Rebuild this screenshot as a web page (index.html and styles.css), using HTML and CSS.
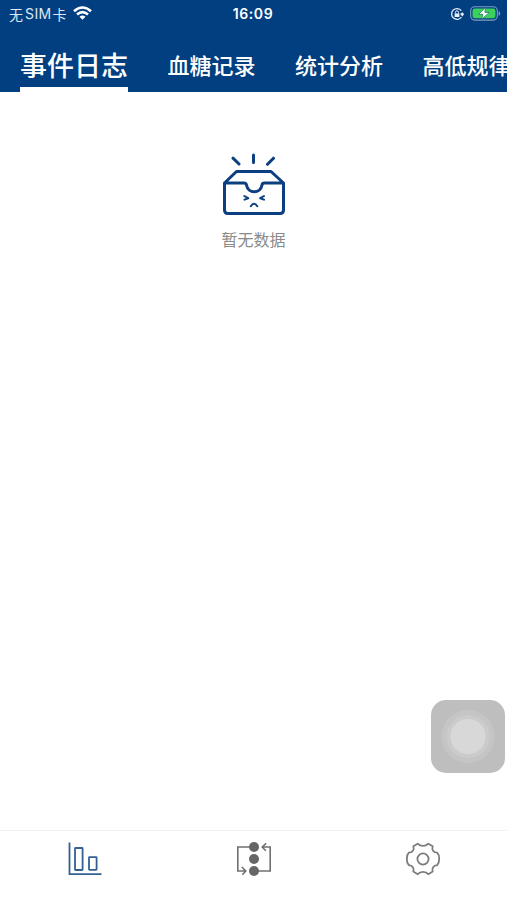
FILE: index.html
```html
<!DOCTYPE html>
<html lang="zh-CN">
  <head>
    <meta charset="UTF-8" />
    <meta name="viewport" content="width=device-width, initial-scale=1.0" />
    <title>事件日志</title>
    <link rel="stylesheet" href="styles.css">
  </head>
  <body>
    <header class="header">
      <div class="status-bar">
        <div class="carrier">
          <span>无</span><span class="sim">SIM</span><span>卡</span>
          <svg class="wifi" width="19" height="14" viewBox="0 0 19 14" fill="none" stroke="#fff" stroke-width="2.6">
            <path d="M1 5.2Q9.500-2.200 18 5.200" />
            <path d="M4 8.500Q9.500 3.900 15 8.500" />
            <path d="M6.500 10.700Q9.500 8.300 12.500 10.700L9.500 13.700Z" fill="#fff" stroke="none" />
          </svg>
        </div>
        <div class="clock">16:09</div>
        <div class="indicators">
          <svg width="14" height="14" viewBox="0 0 14 14" fill="none" stroke="#e6eef8" stroke-width="1.3">
            <path d="M11.300 3.700A5.400 5.400 0 1 0 11.500 10M12.300 8V5.500M10.600 6.500L12.300 8.500L13.700 6.500" />
            <rect x="4.600" y="6.400" width="4.800" height="3.600" fill="#e6eef8" stroke="none" />
            <path d="M5.500 6.400V5.300A1.500 1.500 0 0 1 8.500 5.300V6.400" stroke-width="1" />
          </svg>
          <svg width="31" height="15" viewBox="0 0 31 15">
            <rect x="0.700" y="0.700" width="26.600" height="13.400" rx="4" fill="none" stroke="#7f9fc2" stroke-width="1.100" />
            <rect x="2.500" y="2.500" width="23" height="9.800" rx="2.400" fill="#3bd15d" />
            <path d="M28.600 5V10Q30.200 9.300 30.200 7.500T28.600 5Z" fill="#7f9fc2" />
            <path d="M15.800 1.500L8.700 8.300H13L11.600 13.300L19.300 6.400H14.800Z" fill="#fff" stroke="#176b5c" stroke-width="0.700" />
          </svg>
        </div>
      </div>
      <nav class="tabs">
        <a class="tab active">事件日志</a>
        <a class="tab">血糖记录</a>
        <a class="tab">统计分析</a>
        <a class="tab">高低规律</a>
      </nav>
    </header>

    <main class="content">
      <svg class="empty-icon" width="64" height="64" viewBox="0 0 64 64" fill="none" stroke="#0b3f80" stroke-width="3" stroke-linecap="round" stroke-linejoin="round">
        <path d="M11 5.200L17 11M31.500 2V9.500M51.500 5.200L45.500 11.300" />
        <path d="M2.500 30L14.500 18.500H49L61.500 30V57Q61.500 60.500 58 60.500H6Q2.500 60.500 2.500 57V30H22Q24 30 24.500 32C26 41 38.500 41 40 32Q40.300 30 42.500 30H61.500" />
        <path d="M22.300 43L26.200 45.200L22.500 46.600M42 43L38.200 45.200L42 46.600M28.800 53.200Q32 48.500 35.300 53.200" stroke-width="2" />
      </svg>
      <p class="empty-text">暂无数据</p>
    </main>

    <div class="assistive-touch"></div>

    <footer class="bottom-nav">
      <a class="nav-item">
        <svg width="36" height="36" viewBox="0 0 36 36" fill="none" stroke="#365f94" stroke-width="1.800">
          <path d="M2.500 1.500V33.200H34.500" />
          <rect x="8" y="7" width="7.600" height="22" rx="0.500" />
          <rect x="22" y="16.200" width="7.600" height="12.600" rx="0.500" />
        </svg>
      </a>
      <a class="nav-item">
        <svg width="36" height="36" viewBox="0 0 36 36" fill="none" stroke="#707070" stroke-width="1.600">
          <path d="M18 6H1.800V30H9.500M5.800 26L9.800 30L6.300 33.700" />
          <path d="M18 30H34.200V6H26.500M30.200 2.300L26.200 6L29.800 9.800" />
          <g fill="#666" stroke="none">
            <circle cx="18" cy="6" r="5" />
            <circle cx="18" cy="18" r="5" />
            <circle cx="18" cy="30" r="5" />
          </g>
        </svg>
      </a>
      <a class="nav-item">
        <svg width="36" height="36" viewBox="0 0 36 36" fill="none" stroke="#7c7c7c" stroke-width="1.800" stroke-linejoin="round">
          <path d="M12.700 2.700L8.300 5.200C9.500 8.700 7.500 11.500 3.800 11.600Q1.800 13.500 1.800 17.800T3.800 24.200C7.500 24.300 9.500 27.200 8.300 30.600L12.700 33.200C15.500 30.200 20.500 30.200 23.300 33.200L27.700 30.600C26.500 27.200 28.500 24.300 32.200 24.200Q34.200 22 34.200 17.800T32.200 11.600C28.500 11.500 26.500 8.700 27.700 5.200L23.300 2.700C20.500 5.700 15.500 5.700 12.700 2.700Z" />
          <circle cx="18" cy="18" r="5.600" />
        </svg>
      </a>
    </footer>
  </body>
</html>
```
FILE: styles.css
```css
* {
  box-sizing: border-box;
}
body {
  margin: 0;
  height: 900px;
  display: flex;
  flex-direction: column;
  overflow: hidden;
  background-color: #fff;
  font-family: "Noto Sans CJK SC", sans-serif;
}
.header {
  height: 92px;
  flex-shrink: 0;
  background-color: #023f81;
  color: #fff;
}
.status-bar {
  height: 27px;
  display: grid;
  grid-template-columns: 1fr auto 1fr;
  align-items: center;
  padding: 0 6px 0 9px;
  font-size: 14px;
  line-height: 26px;
}
.carrier {
  display: flex;
  align-items: center;
  color: #dce7f3;
}
.sim {
  margin: 0 1px 0 2px;
  font-family: Inter, sans-serif;
  font-size: 14px;
  letter-spacing: 0.400px;
}
.wifi {
  margin: 0 0 2px 6px;
}
.clock {
  margin-left: -4px;
  font-family: Inter, sans-serif;
  font-size: 14px;
  font-weight: 600;
  letter-spacing: 0.600px;
}
.indicators {
  display: flex;
  justify-content: flex-end;
  align-items: center;
  gap: 6px;
}
.tabs {
  height: 65px;
  display: flex;
  gap: 39.500px;
  padding-left: 20px;
  overflow: hidden;
}
.tab {
  flex-shrink: 0;
  height: 65px;
  font-size: 22px;
  font-weight: 500;
  line-height: 75px;
  white-space: nowrap;
}
.tab.active {
  border-bottom: 5px solid #fff;
  font-size: 27px;
}
.content {
  flex: 1;
  display: flex;
  flex-direction: column;
  align-items: center;
  padding-top: 61px;
}
.empty-icon {
  display: block;
}
.empty-text {
  margin: 10px 0 0;
  color: #8a8a8a;
  font-size: 16px;
  line-height: 24px;
}
.assistive-touch {
  position: fixed;
  right: 2px;
  bottom: 127px;
  width: 74px;
  height: 73px;
  border-radius: 15px;
  background: radial-gradient(circle, #d8d8d8 0 17px, #cbcbcb 18px 21px, #c5c5c5 22px 26px, #bebebe 27px);
}
.bottom-nav {
  height: 70px;
  flex-shrink: 0;
  display: flex;
  padding-top: 10px;
  border-top: 1px solid #f2f2f2;
}
.nav-item {
  flex: 1;
  display: flex;
  justify-content: center;
}
```
